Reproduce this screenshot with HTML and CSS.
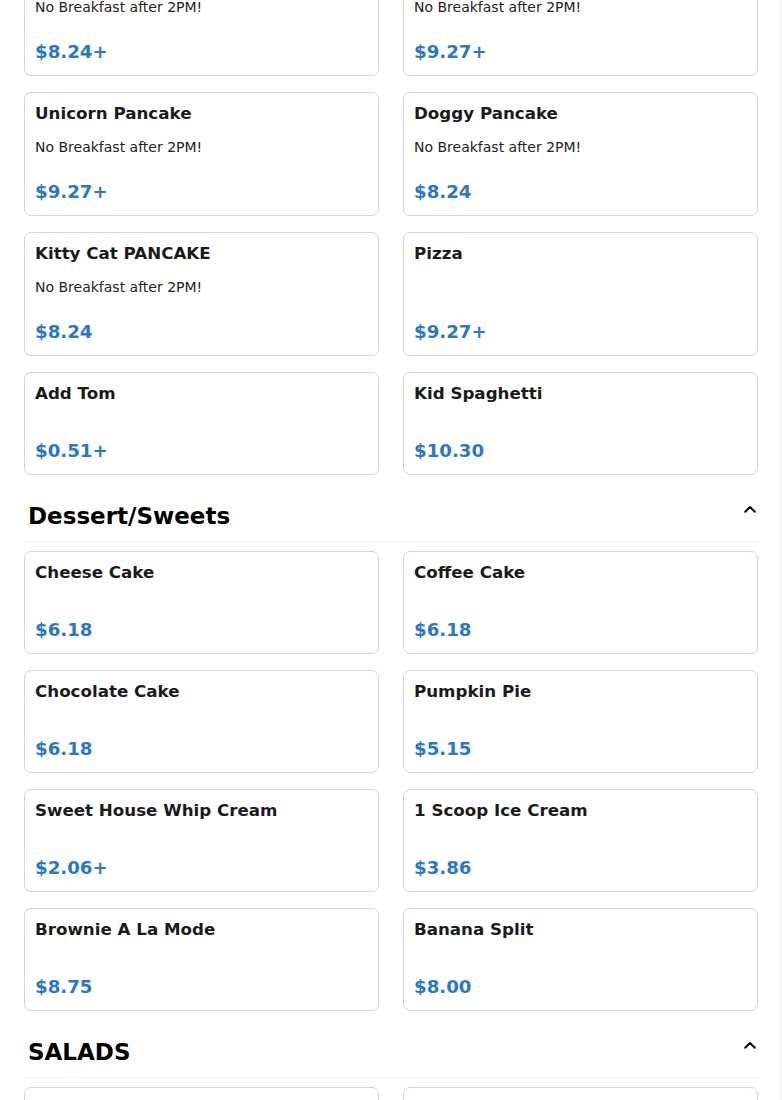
FILE: index.html
```html
<!DOCTYPE html>
<html lang="en">
<head>
<meta charset="utf-8">
<title>Menu</title>
<link rel="stylesheet" href="styles.css">
</head>
<body>
<div class="page">
  <div class="grid grid-first">
    <div class="card">
      <div class="title">Bear Pancake</div>
      <div class="desc">No Breakfast after 2PM!</div>
      <div class="price">$8.24+</div>
    </div>
    <div class="card">
      <div class="title">Mickey Pancake</div>
      <div class="desc">No Breakfast after 2PM!</div>
      <div class="price">$9.27+</div>
    </div>
    <div class="card">
      <div class="title">Unicorn Pancake</div>
      <div class="desc">No Breakfast after 2PM!</div>
      <div class="price">$9.27+</div>
    </div>
    <div class="card">
      <div class="title">Doggy Pancake</div>
      <div class="desc">No Breakfast after 2PM!</div>
      <div class="price">$8.24</div>
    </div>
    <div class="card">
      <div class="title">Kitty Cat PANCAKE</div>
      <div class="desc">No Breakfast after 2PM!</div>
      <div class="price">$8.24</div>
    </div>
    <div class="card">
      <div class="title">Pizza</div>
      <div class="price">$9.27+</div>
    </div>
    <div class="card">
      <div class="title">Add Tom</div>
      <div class="price">$0.51+</div>
    </div>
    <div class="card">
      <div class="title">Kid Spaghetti</div>
      <div class="price">$10.30</div>
    </div>
  </div>

  <div class="section-head">
    <h2 class="section-title">Dessert/Sweets</h2>
    <svg class="chevron" width="16" height="16" viewBox="0 0 16 16"><path d="M3.2 10.8 L8 6 L12.8 10.8" fill="none" stroke="#000" stroke-width="2" stroke-linecap="round" stroke-linejoin="round"/></svg>
  </div>
  <div class="grid">
    <div class="card">
      <div class="title">Cheese Cake</div>
      <div class="price">$6.18</div>
    </div>
    <div class="card">
      <div class="title">Coffee Cake</div>
      <div class="price">$6.18</div>
    </div>
    <div class="card">
      <div class="title">Chocolate Cake</div>
      <div class="price">$6.18</div>
    </div>
    <div class="card">
      <div class="title">Pumpkin Pie</div>
      <div class="price">$5.15</div>
    </div>
    <div class="card">
      <div class="title">Sweet House Whip Cream</div>
      <div class="price">$2.06+</div>
    </div>
    <div class="card">
      <div class="title">1 Scoop Ice Cream</div>
      <div class="price">$3.86</div>
    </div>
    <div class="card">
      <div class="title">Brownie A La Mode</div>
      <div class="price">$8.75</div>
    </div>
    <div class="card">
      <div class="title">Banana Split</div>
      <div class="price">$8.00</div>
    </div>
  </div>

  <div class="section-head">
    <h2 class="section-title">SALADS</h2>
    <svg class="chevron" width="16" height="16" viewBox="0 0 16 16"><path d="M3.2 10.8 L8 6 L12.8 10.8" fill="none" stroke="#000" stroke-width="2" stroke-linecap="round" stroke-linejoin="round"/></svg>
  </div>
  <div class="grid">
    <div class="card">
      <div class="title">Chef Salad</div>
      <div class="price">$10.30</div>
    </div>
    <div class="card">
      <div class="title">Chicken Caesar Salad</div>
      <div class="price">$11.33</div>
    </div>
  </div>
</div>
</body>
</html>
```
FILE: styles.css
```css
html, body {
  margin: 0;
  padding: 0;
  background: #fff;
}
body {
  font-family: "DejaVu Sans", "Liberation Sans", sans-serif;
  color: #1c1c1c;
  overflow: hidden;
}
.page {
  width: 782px;
  box-sizing: border-box;
  padding: 0 21px 40px 24px;
  border-right: 3px solid #f6f6f6;
}
.grid {
  display: grid;
  grid-template-columns: 355px 355px;
  column-gap: 24px;
  row-gap: 16px;
}
.grid-first {
  margin-top: -48px;
}
.card {
  box-sizing: border-box;
  min-height: 103px;
  border: 1px solid #d4d4d4;
  border-radius: 7px;
  padding: 9px 10px 11px;
  display: flex;
  flex-direction: column;
  background: #fff;
}
.title {
  font-size: 16.7px;
  font-weight: bold;
  line-height: 22px;
  color: #1a1a1a;
}
.desc {
  font-size: 14px;
  line-height: 20px;
  margin-top: 13px;
  margin-bottom: 23px;
  color: #222;
}
.price {
  margin-top: auto;
  font-size: 18.2px;
  font-weight: bold;
  line-height: 24px;
  color: #2a78c3;
}
.section-head {
  display: flex;
  justify-content: space-between;
  align-items: flex-start;
  margin-top: 26px;
  margin-bottom: 9px;
  padding: 0 0 10px 4px;
  border-bottom: 1px solid #f3f3f3;
}
.section-title {
  margin: 0;
  font-size: 23px;
  line-height: 30px;
  font-weight: bold;
  color: #000;
}
.chevron {
  display: block;
}
```
